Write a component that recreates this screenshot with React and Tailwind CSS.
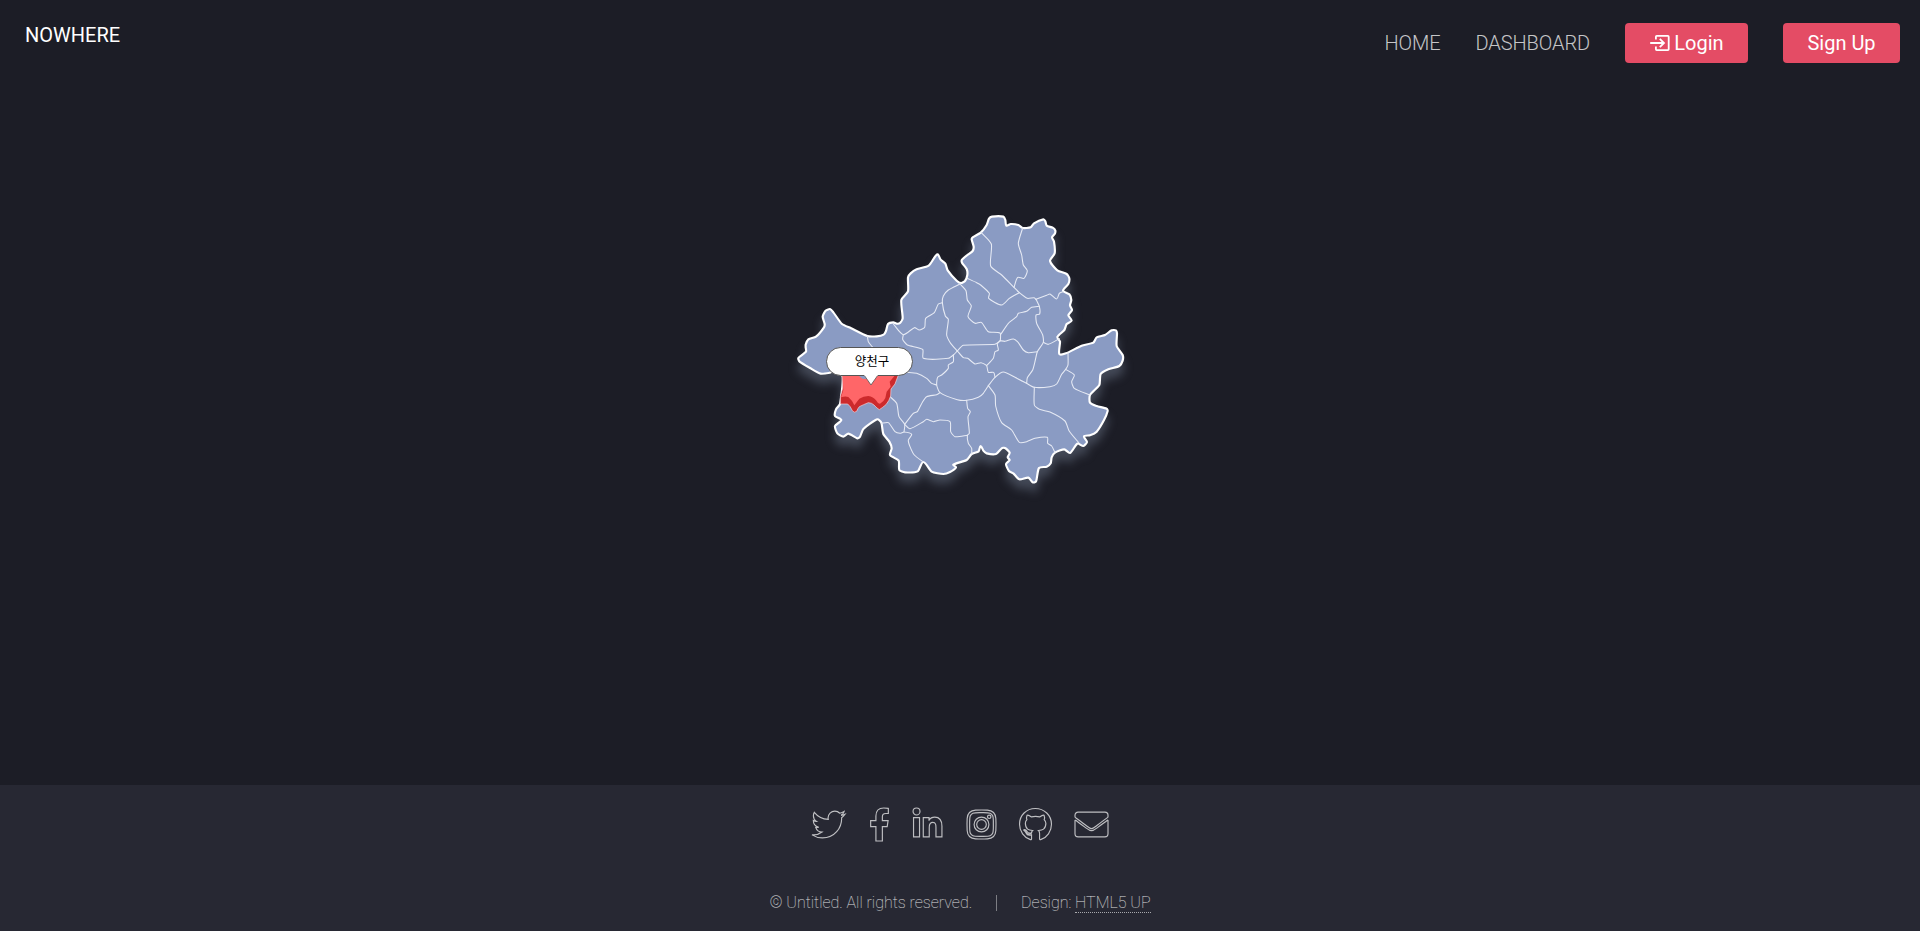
import { FaTwitter, FaFacebookF, FaLinkedinIn, FaInstagram, FaGithub, FaEnvelope } from "react-icons/fa";

const outline =
  "M77 442L77 434L85 418L108 410L132 382L134 372L128 350L136 333L150 327L160 337L186 372L212 384L262 408L290 409L311 404L318 393L324 372L340 367L350 371L360 369L368 355L364 300L384 274L384 232L392 220L410 208L446 197L472 163L482 179L496 191L503 211L530 242L543 249L555 243L562 225L560 207L546 188L546 179L562 165L578 153L581 140L575 118L578 112L603 97L620 75L627 56L636 50L670 50L676 60L679 77L692 72L715 75L728 84L752 82L762 70L790 58L796 64L800 77L818 83L826 92L824 102L816 112L822 125L824 160L810 183L832 211L860 222L868 235L865 252L849 272L868 283L874 300L870 316L876 330L865 346L875 362L860 372L853 390L832 411L840 425L838 462L858 460L905 437L940 428L950 412L975 405L995 391L1008 391L1011 400L1010 438L1028 465L1028 482L1018 498L985 508L962 522L958 555L930 585L930 608L950 618L980 626L983 633L972 660L950 695L930 706L912 709L921 726L910 738L892 731L870 759L853 748L825 758L815 772L812 790L800 800L777 804L768 845L758 847L745 833L718 838L700 820L687 813L678 792L689 780L683 772L689 758L675 744L665 745L648 762L620 760L610 752L602 738L596 754L575 762L560 780L520 794L528 802L510 816L490 822L455 815L430 786L413 814L375 817L358 810L356 782L330 765L335 745L328 725L310 702L304 668L292 658L250 687L240 710L232 715L205 701L190 710L172 700L165 678L184 660L165 648L168 628L180 612L188 530L170 512L150 518L122 521L90 504L58 484L55 474L78 455L77 442";

const districts = [
  "M540 252L505 270L490 288L487 308L496 348L505 358L500 405L512 430L532 453",
  "M487 308L475 312L463 338L437 355L434 382L418 390L403 383L370 404L340 372",
  "M370 404L368 418L382 435L428 448L430 475L505 475L520 465L532 453",
  "M540 252L558 272L562 300L574 318L564 350L585 370L604 367L625 395L660 399L661 422",
  "M532 453L550 436L645 433L661 422",
  "M661 405L685 370L710 350L715 340L740 334L755 322L778 319",
  "M661 422L675 424L700 417L715 428L730 450L745 458L772 455",
  "M768 298L778 319L779 342L768 345L770 370L788 405L790 427L772 455L766 480L758 510L742 533L740 550",
  "M790 427L805 433L838 416",
  "M661 422L652 432L655 450L645 455L640 475L620 497",
  "M532 453L550 473L563 475L585 492L603 488L620 497L625 517L641 517L645 532",
  "M625 557L645 532L670 516L705 532L740 550L763 562L810 560L830 552L845 523L857 508L864 495L864 458",
  "M857 508L883 525L875 545L883 565L930 585",
  "M625 557L610 580L595 592L560 601L532 599L480 578L470 555L473 532L485 525L505 505L505 495L520 485L520 465",
  "M380 517L410 520L440 535L455 550L470 555",
  "M480 578L470 584L440 590L428 605L412 635L400 640L374 673",
  "M330 590L350 610L357 650L374 673L372 696",
  "M304 670L325 668L345 695L360 700L372 696L395 703L385 720L390 740L403 765L430 786",
  "M374 673L390 686L430 665L440 658L460 665L480 660L510 665L512 695L525 710L562 706",
  "M560 601L563 625L571 635L564 650L568 700L562 706L565 730L575 745L575 762",
  "M625 557L645 585L647 618L665 668L695 690L718 727L740 725L765 715L802 712L803 730L815 738L825 758",
  "M763 562L763 615L778 628L810 636L855 663L867 692L896 728",
  "M728 84L715 130L725 165L730 195L742 212L732 235L713 232L702 262",
  "M603 97L634 132L632 198L665 225L702 262L718 278L742 295L762 293L768 298",
  "M562 235L590 248L602 255L628 280L626 295L665 315L688 295L718 278",
  "M768 298L800 286L810 282L830 297L838 280L849 275",
  "M262 408L265 425L278 442",
];

// Rounds a polyline path into a curve through the same points.
function smooth(d) {
  const p = d.slice(1).split("L").map((s) => s.split(" ").map(Number));
  let out = `M${p[0].join(" ")}`;
  for (let i = 0; i < p.length - 1; i++) {
    const a = p[i - 1] || p[i];
    const b = p[i];
    const c = p[i + 1];
    const e = p[i + 2] || c;
    const len = Math.hypot(c[0] - b[0], c[1] - b[1]);
    const handle = (from, to) => {
      const dx = to[0] - from[0];
      const dy = to[1] - from[1];
      const k = (len * 0.2) / (Math.hypot(dx, dy) || 1);
      return [dx * k, dy * k];
    };
    const h1 = handle(a, c);
    const h2 = handle(b, e);
    out += `C${b[0] + h1[0]} ${b[1] + h1[1]} ${c[0] - h2[0]} ${c[1] - h2[1]} ${c[0]} ${c[1]}`;
  }
  return out;
}

function SeoulMap() {
  return (
    <div className="relative h-[300px] w-[360px]">
      <svg viewBox="0 0 1080 900" className="size-full overflow-visible" strokeLinejoin="round" strokeLinecap="round">
        <path d={smooth(outline)} className="fill-[#8a9bc3] stroke-white stroke-[6.5] [filter:drop-shadow(0_27px_15px_rgba(150,165,190,0.32))]" />
        <g className="fill-none stroke-[#e6eaf4] stroke-[3.2]">
          {districts.map((d) => <path key={d} d={smooth(d)} />)}
        </g>
        <path d="M187 520L188 565L181 590L181 612L203 612Q211 618 217 632Q223 640 230 634Q234 624 238 620Q250 614 265 608Q275 608 282 615Q292 626 298 629Q306 624 318 614Q328 602 332 588L333 567L345 552L354 528L350 515Z" className="fill-[#cc2a2c] stroke-[#f1d5dc] stroke-[2]" />
        <path d="M187 520L190 570L183 592Q196 588 205 591Q216 600 223 616Q230 606 238 596Q250 588 265 588Q280 590 288 601Q294 612 300 611Q312 604 316 594L320 575L332 560L329 545L350 520Z" className="fill-[#ff6668]" />
        <path d="M230 522L247 536L262 537V522Z" className="fill-[#8a9bc3]" />
      </svg>
      <div className="absolute left-[46px] top-[147px] flex h-[29px] w-[87px] items-center justify-center rounded-full border border-[#555] bg-white pl-[5px] font-['Noto_Sans_CJK_KR',sans-serif] text-[12.5px] font-normal text-black">
        양천구
      </div>
      <svg viewBox="0 0 14 11" className="absolute left-[84px] top-[174.5px] h-[11px] w-[14px]">
        <path d="M0 0L7 10L14 0" className="fill-white stroke-[#555] stroke-[0.8]" />
        <path d="M0.5 0H13.5" className="stroke-white stroke-2" />
      </svg>
    </div>
  );
}

function LoginIcon() {
  return (
    <svg viewBox="0 0 20 18" className="h-[18px] w-[20px] fill-none stroke-current stroke-[1.8]">
      <path d="M5.9 5.6V2.7Q5.9 1.9 6.7 1.9H17.9Q18.7 1.9 18.7 2.7V15.3Q18.7 16.1 17.9 16.1H6.7Q5.9 16.1 5.9 15.3V12.4M0.2 9H14M9.8 4.8L14 9L9.8 13.2" />
    </svg>
  );
}

const socials = [
  { Icon: FaTwitter, label: "Twitter", cls: "w-[34px]" },
  { Icon: FaFacebookF, label: "Facebook", cls: "w-[23.6px]" },
  { Icon: FaLinkedinIn, label: "LinkedIn", cls: "w-[29.8px]" },
  { Icon: FaInstagram, label: "Instagram", cls: "w-[33.2px]" },
  { Icon: FaGithub, label: "GitHub", cls: "w-[30.8px]" },
  { Icon: FaEnvelope, label: "Email", cls: "w-[37.2px]" },
];

export default function App() {
  return (
    <div className="flex h-[931px] flex-col bg-[#1c1d26] font-[Roboto,sans-serif] font-light text-white/75">
      <header className="flex h-[86px] items-start justify-between pl-[25px] pr-5">
        <h1 className="mt-[21px] text-[20px] leading-7 font-normal text-white">NOWHERE</h1>
        <nav className="mt-[23px] flex h-10 items-center gap-[35px] text-[20px] whitespace-nowrap">
          <a className="font-light tracking-[-0.1px]">HOME</a>
          <a className="font-light tracking-[-0.1px]">DASHBOARD</a>
          <a className="flex h-10 w-[123px] items-center justify-center gap-1 rounded bg-[#e44c65] pl-px font-normal text-white"><LoginIcon />Login</a>
          <a className="flex h-10 w-[117px] items-center justify-center rounded bg-[#e44c65] font-normal text-white">Sign Up</a>
        </nav>
      </header>
      <main className="flex h-[699px] justify-center pt-[114px]">
        <SeoulMap />
      </main>
      <footer className="flex h-[146px] flex-col items-center bg-[#272833]">
        <ul className="mt-[21px] flex h-9 items-center gap-[22px] pl-px">
          {socials.map(({ Icon, label, cls }) => (
            <li key={label} className={`flex justify-center ${cls}`}>
              <Icon aria-label={label} className="h-[33px] w-auto shrink-0 overflow-visible [&_path]:fill-none [&_path]:stroke-white/70 [&_path]:stroke-[18]" />
            </li>
          ))}
        </ul>
        <div className="mt-[47px] flex h-7 items-center text-[16px] font-thin text-white/85">
          <span>© Untitled. All rights reserved.</span>
          <span className="mx-6 h-4 border-l border-white/40" />
          <span>Design: <a className="border-b border-dotted border-white/60">HTML5 UP</a></span>
        </div>
      </footer>
    </div>
  );
}
